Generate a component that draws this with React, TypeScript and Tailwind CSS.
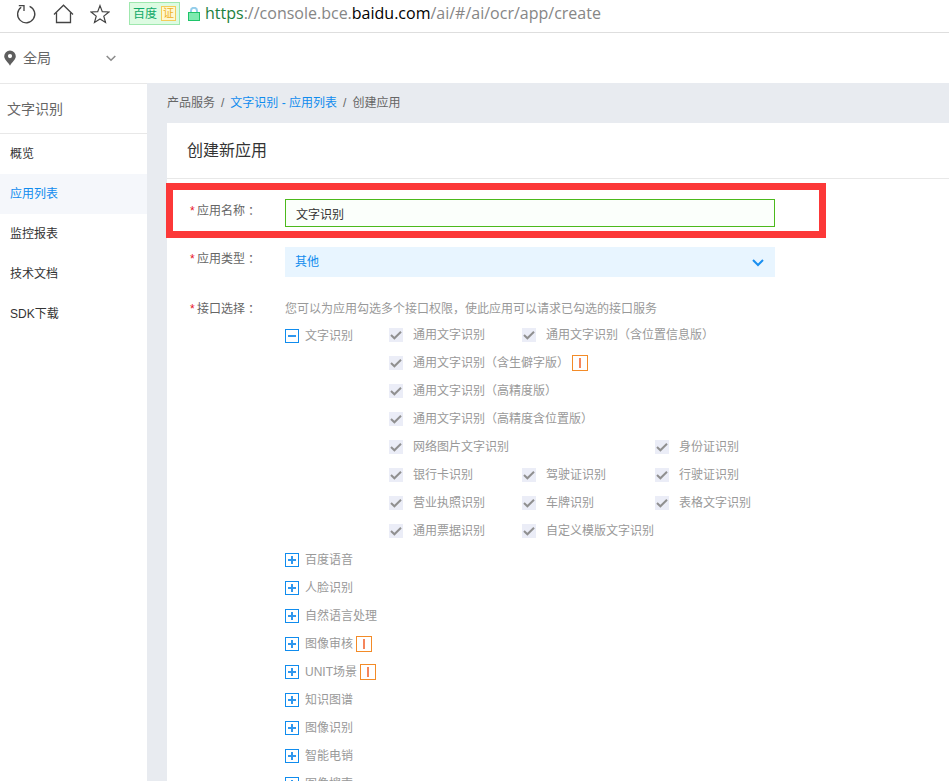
import { useState } from "react";
import type { ReactNode } from "react";

interface ApiOption {
  name: string;
  span?: string;
  invite?: boolean;
}

interface ApiGroup {
  name: string;
  invite?: boolean;
}

const NAV_ITEMS = ["概览", "应用列表", "监控报表", "技术文档", "SDK下载"];

const OCR_OPTIONS: ApiOption[] = [
  { name: "通用文字识别" },
  { name: "通用文字识别（含位置信息版）", span: "col-span-2" },
  { name: "通用文字识别（含生僻字版）", span: "col-span-3", invite: true },
  { name: "通用文字识别（高精度版）", span: "col-span-3" },
  { name: "通用文字识别（高精度含位置版）", span: "col-span-3" },
  { name: "网络图片文字识别", span: "col-span-2" },
  { name: "身份证识别" },
  { name: "银行卡识别" },
  { name: "驾驶证识别" },
  { name: "行驶证识别" },
  { name: "营业执照识别" },
  { name: "车牌识别" },
  { name: "表格文字识别" },
  { name: "通用票据识别" },
  { name: "自定义模版文字识别", span: "col-span-2" },
];

const OTHER_GROUPS: ApiGroup[] = [
  { name: "百度语音" },
  { name: "人脸识别" },
  { name: "自然语言处理" },
  { name: "图像审核", invite: true },
  { name: "UNIT场景", invite: true },
  { name: "知识图谱" },
  { name: "图像识别" },
  { name: "智能电销" },
  { name: "图像搜索" },
];

function BrowserBar() {
  return (
    <header className="flex h-[33px] shrink-0 items-start border-b border-[#dedede] pl-4">
      <div className="flex h-7 items-center gap-4 text-[#444]">
        <button type="button" aria-label="刷新">
          <svg width="21" height="20" viewBox="0 0 21 20" fill="none" stroke="currentColor" strokeWidth="1.3">
            <path d="M13.6 2.3A8.6 8.6 0 1 1 5.2 3.2" />
            <path d="M2.8 1.6H8V7" />
          </svg>
        </button>
        <button type="button" aria-label="主页">
          <svg width="21" height="20" viewBox="0 0 21 20" fill="none" stroke="currentColor" strokeWidth="1.3">
            <path d="M1 10.5L10.5 1.2L20 10.5" />
            <path d="M3.5 8.5V18.5H17.5V8.5" />
          </svg>
        </button>
        <button type="button" aria-label="收藏">
          <svg width="20" height="20" viewBox="0 0 20 20" fill="none" stroke="currentColor" strokeWidth="1.2">
            <path d="M10 1.6L12.3 7.6L18.9 8L13.8 12.1L15.5 18.5L10 14.9L4.5 18.5L6.2 12.1L1.1 8L7.7 7.6Z" />
          </svg>
        </button>
      </div>
      <div className="mt-0.5 ml-[19px] flex h-[23px] items-center gap-1 border border-[#9fe8ae] bg-[#ddfbe2] px-[3px] text-xs text-[#0fa968]">
        <span>百度</span>
        <span className="flex size-[15px] items-center justify-center border border-[#f5cc5a] bg-[#fff8d0] text-[11px] text-[#eeb01e]">
          证
        </span>
      </div>
      <svg className="mt-[7px] ml-2 shrink-0" width="12" height="14" viewBox="0 0 12 14" fill="none">
        <path d="M3 6V3.8A3 3 0 0 1 9 3.8V6" stroke="#93cdea" strokeWidth="2" />
        <rect x="0.5" y="5.5" width="11" height="8" fill="#7eeab0" stroke="#1fc46a" />
      </svg>
      <p className="ml-[5px] font-['Open_Sans','Noto_Sans',sans-serif] text-base leading-[26px] whitespace-nowrap text-[#868686]">
        <span className="text-[#1c8040]">https</span>://console.bce.<span className="text-black">baidu.com</span>
        /ai/#/ai/ocr/app/create
      </p>
    </header>
  );
}

function RegionBar() {
  return (
    <div className="flex h-[50px] shrink-0 items-center pl-1">
      <button type="button" className="flex w-28 items-center text-sm text-[#666]">
        <svg width="12" height="16" viewBox="0 0 12 16">
          <path
            fillRule="evenodd"
            fill="#5e5e5e"
            d="M6 0.5A5.8 5.8 0 0 1 11.8 6.3C11.8 9.6 8.2 11.9 6 15.8C3.8 11.9 0.2 9.6 0.2 6.3A5.8 5.8 0 0 1 6 0.5ZM6 4A2.1 2.1 0 1 0 6 8.2A2.1 2.1 0 0 0 6 4Z"
          />
        </svg>
        <span className="ml-[7px]">全局</span>
        <svg className="ml-auto" width="10" height="7" viewBox="0 0 10 7" fill="none" stroke="#8c8c8c" strokeWidth="1.6">
          <path d="M0.7 1L5 5.2L9.3 1" />
        </svg>
      </button>
    </div>
  );
}

function Sidebar() {
  return (
    <aside className="w-[147px] shrink-0 border-t border-[#e8e8e8] bg-white">
      <h1 className="flex h-[50px] items-center border-b border-[#e8e8e8] pl-[7px] text-sm text-[#666]">文字识别</h1>
      <nav>
        {NAV_ITEMS.map((item) => (
          <a
            key={item}
            href="#"
            className={
              item === "应用列表"
                ? "flex h-10 items-center bg-[#f5f7fb] pl-2.5 text-[#108cee]"
                : "flex h-10 items-center pl-2.5 text-[#333]"
            }
          >
            {item}
          </a>
        ))}
      </nav>
    </aside>
  );
}

function Label({ htmlFor, children }: { htmlFor?: string; children: ReactNode }) {
  return (
    <label htmlFor={htmlFor} className="flex h-6 w-[95px] shrink-0 items-center text-[#666]">
      <span className="w-[7px] text-[#e8141e]">*</span>
      {children}
      <span lang="zh-TW" className="font-['Noto_Sans_CJK_TC',sans-serif]">
        ：
      </span>
    </label>
  );
}

function InviteBadge() {
  return (
    <span className="ml-[3px] flex size-4 shrink-0 items-center justify-center border border-[#f38b28]">
      <span className="h-2.5 w-0.5 bg-[#f5855c]" />
    </span>
  );
}

function OptionCheckbox({ option }: { option: ApiOption }) {
  return (
    <div className={option.span}>
      <label className="flex h-7 items-center whitespace-nowrap">
        <span className="relative size-3.5 shrink-0">
          <input type="checkbox" defaultChecked disabled className="block size-3.5 appearance-none bg-[#ebedf7]" />
          <svg
            className="pointer-events-none absolute inset-0"
            width="14"
            height="14"
            viewBox="0 0 14 14"
            fill="none"
            stroke="#909090"
            strokeWidth="2"
          >
            <path d="M2 7L5.4 10.3L12 3.8" />
          </svg>
        </span>
        <span className="ml-2.5">{option.name}</span>
        {option.invite && <InviteBadge />}
      </label>
    </div>
  );
}

function Expander({ open, name, onClick }: { open: boolean; name: string; onClick?: () => void }) {
  return (
    <button
      type="button"
      aria-expanded={open}
      aria-label={name}
      onClick={onClick}
      className="flex size-3.5 shrink-0 items-center justify-center border border-[#108cee]"
    >
      <svg width="8" height="8" viewBox="0 0 8 8" fill="#2f97ee">
        <rect x="0" y="3" width="8" height="2" />
        {!open && <rect x="3" y="0" width="2" height="8" />}
      </svg>
    </button>
  );
}

function ApiTree() {
  const [open, setOpen] = useState(true);

  return (
    <ul>
      <li className="flex pb-px">
        <div className="flex h-[30px] w-[104px] shrink-0 items-center gap-1.5">
          <Expander open={open} name="文字识别" onClick={() => setOpen(!open)} />
          <span>文字识别</span>
        </div>
        {open && (
          <div className="grid grid-cols-[133px_133px_133px]">
            {OCR_OPTIONS.map((option) => (
              <OptionCheckbox key={option.name} option={option} />
            ))}
          </div>
        )}
      </li>
      {OTHER_GROUPS.map((group) => (
        <li key={group.name} className="flex h-7 items-center">
          <Expander open={false} name={group.name} />
          <span className="ml-1.5">{group.name}</span>
          {group.invite && <InviteBadge />}
        </li>
      ))}
    </ul>
  );
}

function CreateForm() {
  return (
    <form className="relative pt-5 pl-[23px]">
      {/* highlighted field */}
      <div className="pointer-events-none absolute top-1 -left-px h-[55px] w-[660px] border-[7px] border-[#fc3838]" />

      <div className="flex">
        <Label htmlFor="app-name">应用名称</Label>
        <input
          id="app-name"
          type="text"
          defaultValue="文字识别"
          className="h-7 w-[490px] border border-[#4cb91c] bg-[#fbfffb] px-2.5 text-[#333] outline-none"
        />
      </div>

      <div className="mt-5 flex">
        <Label htmlFor="app-type">应用类型</Label>
        <div className="relative w-[490px]">
          <select
            id="app-type"
            className="block h-[30px] w-full appearance-none bg-[#e8f5ff] px-2.5 text-[#108cee] outline-none"
          >
            <option>其他</option>
          </select>
          <svg
            className="pointer-events-none absolute top-3 right-[11px]"
            width="12"
            height="8"
            viewBox="0 0 12 8"
            fill="none"
            stroke="#1a8ff0"
            strokeWidth="2"
          >
            <path d="M1 1L6 6L11 1" />
          </svg>
        </div>
      </div>

      <div className="mt-5 flex">
        <Label>接口选择</Label>
        <div className="text-[#999]">
          <p className="h-6 leading-6">您可以为应用勾选多个接口权限，使此应用可以请求已勾选的接口服务</p>
          <ApiTree />
        </div>
      </div>
    </form>
  );
}

export default function App() {
  return (
    <div
      lang="zh-CN"
      className="flex h-screen flex-col overflow-hidden bg-white font-['Liberation_Sans','Noto_Sans_CJK_SC',sans-serif] text-xs"
    >
      <BrowserBar />
      <RegionBar />
      <div className="flex min-h-0 flex-1">
        <Sidebar />
        <main className="flex min-w-0 flex-1 flex-col bg-[#e8ebf0] pl-5">
          <div className="flex h-10 shrink-0 items-center gap-1.5 text-[#666]">
            <span>产品服务</span>
            <span>/</span>
            <a href="#" className="text-[#108cee]">
              文字识别 - 应用列表
            </a>
            <span>/</span>
            <span>创建应用</span>
          </div>
          <section className="flex-1 bg-white">
            <h2 className="flex h-14 items-center border-b border-[#e8e8e8] pl-5 text-base text-[#333]">创建新应用</h2>
            <CreateForm />
          </section>
        </main>
      </div>
    </div>
  );
}
